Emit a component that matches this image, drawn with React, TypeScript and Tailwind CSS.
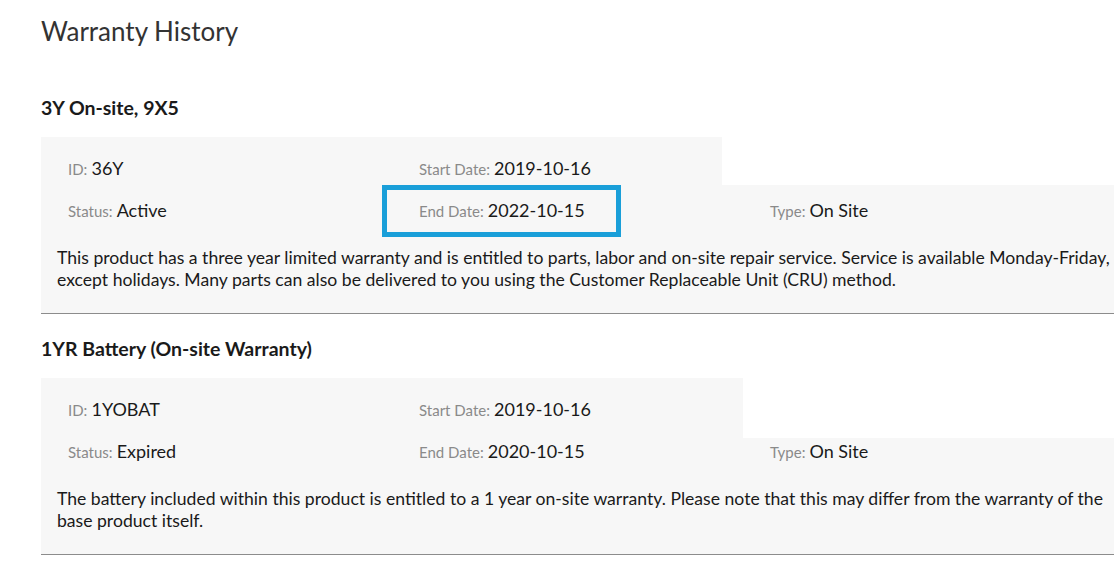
import React from 'react';

type Warranty = {
    title: string;
    id: string;
    status: string;
    start: string;
    end: string;
    type: string;
    description: string;
    topWidth: string;
    topHeight: string;
    statusHeight: string;
    highlightEnd?: boolean;
};

const warranties: Warranty[] = [
    {
        title: '3Y On-site, 9X5',
        id: '36Y',
        status: 'Active',
        start: '2019-10-16',
        end: '2022-10-15',
        type: 'On Site',
        description:
            'This product has a three year limited warranty and is entitled to parts, labor and on-site repair service. Service is available Monday-Friday, except holidays. Many parts can also be delivered to you using the Customer Replaceable Unit (CRU) method.',
        topWidth: 'w-[681px]',
        topHeight: 'h-[48px]',
        statusHeight: 'h-[52px]',
        highlightEnd: true,
    },
    {
        title: '1YR Battery (On-site Warranty)',
        id: '1YOBAT',
        status: 'Expired',
        start: '2019-10-16',
        end: '2020-10-15',
        type: 'On Site',
        description:
            'The battery included within this product is entitled to a 1 year on-site warranty. Please note that this may differ from the warranty of the base product itself.',
        topWidth: 'w-[702px]',
        topHeight: 'h-[60px]',
        statusHeight: 'h-[40px]',
    },
];

function Field({ label, value }: { label: string; value: string }) {
    return (
        <span className="whitespace-nowrap leading-[20px]">
            <span className="text-[15px] text-[#8a8a8a]">{label}:</span>{' '}
            <span className="text-[18px] text-[#1a1a1a]">{value}</span>
        </span>
    );
}

function WarrantyCard({ w }: { w: Warranty }) {
    return (
        <section>
            <h2 className="h-[46px] pt-[5px] text-[19.5px] font-bold leading-[24px] text-[#1a1a1a]">{w.title}</h2>

            <div className="flex flex-col bg-[#f7f7f7] border-b border-[#8c8c8c]">
                {/* Top Row - ID / Start Date */}
                <div className={`flex ${w.topHeight}`}>
                    <div className={`flex ${w.topWidth} pt-[20px]`}>
                        <div className="w-[341px] pl-[27px]">
                            <Field label="ID" value={w.id} />
                        </div>
                        <div className="pl-[37px]">
                            <Field label="Start Date" value={w.start} />
                        </div>
                    </div>
                    <div className="flex-1 bg-white" />
                </div>

                {/* Status Row */}
                <div className={`flex items-stretch ${w.statusHeight}`}>
                    <div className="flex w-[341px] items-end pb-[16px] pl-[27px]">
                        <Field label="Status" value={w.status} />
                    </div>
                    <div className="w-[351px]">
                        <div
                            className={`flex h-full w-[239px] items-end border-[5px] pb-[11px] pl-[32px] ${
                                w.highlightEnd ? 'border-[#1a9fd9]' : 'border-transparent'
                            }`}
                        >
                            <Field label="End Date" value={w.end} />
                        </div>
                    </div>
                    <div className="flex items-end pb-[16px] pl-[37px]">
                        <Field label="Type" value={w.type} />
                    </div>
                </div>

                {/* Description */}
                <p className="mt-[10px] pb-[22px] pl-[16px] text-[17.6px] leading-[22px] text-[#1a1a1a]">
                    {w.description}
                </p>
            </div>
        </section>
    );
}

export default function App() {
    return (
        <div
            className="min-h-[577px] w-full overflow-hidden bg-white"
            style={{ fontFamily: 'Lato, "Open Sans", sans-serif' }}
        >
            <div className="ml-[41px] w-[1090px]">
                <h1 className="pt-[15px] text-[26px] leading-[32px] text-[#333333]">Warranty History</h1>
                <div className="mt-[44px] flex flex-col gap-[18px]">
                    {warranties.map((w) => (
                        <WarrantyCard key={w.id} w={w} />
                    ))}
                </div>
            </div>
        </div>
    );
}
